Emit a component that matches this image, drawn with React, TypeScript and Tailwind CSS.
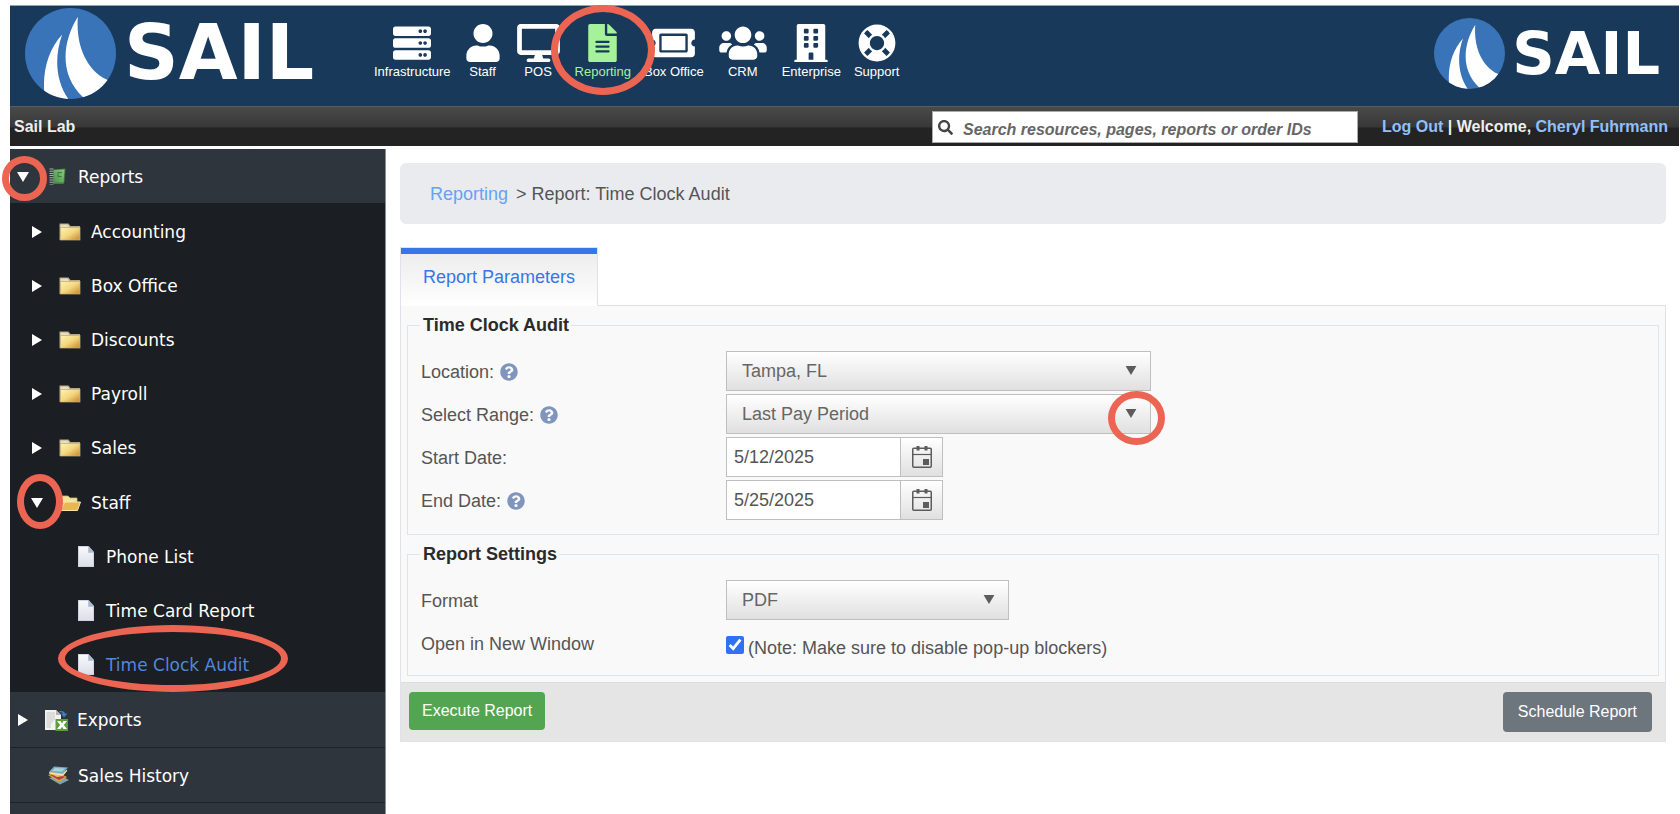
import { useState } from "react";
import type { ReactNode } from "react";
import type { IconType } from "react-icons";
import {
  FaBuilding,
  FaDesktop,
  FaFileAlt,
  FaLifeRing,
  FaQuestionCircle,
  FaSearch,
  FaServer,
  FaTicketAlt,
  FaUser,
  FaUsers,
} from "react-icons/fa";

function SailMark({ className }: { className: string }) {
  return (
    <svg viewBox="76 24 272 272" className={className} aria-hidden="true">
      <defs>
        <clipPath id="sail-disc">
          <circle cx="212" cy="160" r="136" />
        </clipPath>
      </defs>
      <circle cx="212" cy="160" r="136" fill="#3a74b8" />
      <g clipPath="url(#sail-disc)" fill="#fff">
        <path d="M187 103 C150 145 130 200 133 268 L140 310 L212 310 L204 294 C168 240 163 170 187 103Z" />
        <path d="M234 50 C185 130 180 225 249 290 L290 300 L340 250 L320 238 C255 205 228 130 234 50Z" />
      </g>
    </svg>
  );
}

function Ring({ className }: { className: string }) {
  return (
    <span
      aria-hidden="true"
      className={`pointer-events-none absolute z-20 rounded-[50%] border-[7px] border-[#ec6552] ${className}`}
    />
  );
}

const navItems: { label: string; icon: IconType; size: string }[] = [
  { label: "Infrastructure", icon: FaServer, size: "w-[38px]" },
  { label: "Staff", icon: FaUser, size: "w-[34px]" },
  { label: "POS", icon: FaDesktop, size: "w-[43px]" },
  { label: "Reporting", icon: FaFileAlt, size: "w-[29px]" },
  { label: "Box Office", icon: FaTicketAlt, size: "w-[43px]" },
  { label: "CRM", icon: FaUsers, size: "w-12" },
  { label: "Enterprise", icon: FaBuilding, size: "w-[34px]" },
  { label: "Support", icon: FaLifeRing, size: "w-[38px]" },
];

function Header() {
  return (
    <header>
      <div className="flex items-start border-t border-[#8fa3b5] bg-[#19395b] pr-[19px] pl-[15px]">
        <a href="#home" aria-label="Sail home" className="flex h-[100px] w-[349px] items-center gap-2 pb-[6px]">
          <SailMark className="size-[91px] shrink-0" />
          <span className="font-['DejaVu_Sans',sans-serif] text-[76px] leading-none font-bold text-white">SAIL</span>
        </a>
        <nav className="flex flex-1 gap-[13px] pt-[18px]">
          {navItems.map(({ label, icon: Icon, size }) => (
            <a
              key={label}
              href={`#${label}`}
              className={`relative flex flex-col items-center ${label === "Reporting" ? "text-[#a6f29a]" : "text-white"}`}
            >
              <Icon className={`mx-0.5 h-[38px] ${size}`} />
              <span className="mt-0.5 text-[13px] leading-4 whitespace-nowrap">{label}</span>
              {label === "Reporting" && <Ring className="top-[-19px] left-[-24px] h-[90px] w-[104px]" />}
            </a>
          ))}
        </nav>
        <a href="#sail" aria-label="Sail" className="flex h-[94px] items-center gap-[7px]">
          <SailMark className="size-[71px] shrink-0" />
          <span className="font-['DejaVu_Sans',sans-serif] text-[59px] leading-none font-bold text-white">SAIL</span>
        </a>
      </div>
      <div className="flex h-10 items-center border-t border-[#5b5b5b] bg-linear-to-b from-[#4a4a4a] from-0% via-[#383838] via-50% to-[#232323] to-55% pr-[11px] pl-1 text-base font-bold text-[#eeeeee]">
        <span className="flex-1">Sail Lab</span>
        <label className="mt-px mr-6 flex h-8 w-[426px] items-center gap-[10px] border border-[#aaaaaa] bg-white pl-[5px]">
          <FaSearch className="size-[15px] shrink-0 text-[#444444]" />
          <input
            aria-label="Search"
            placeholder="Search resources, pages, reports or order IDs"
            className="w-full bg-transparent pt-[6px] text-base font-bold italic outline-none placeholder:text-[#666666]"
          />
        </label>
        <span>
          <a href="#logout" className="text-[#8fc0fb]">Log Out</a> | Welcome,{" "}
          <a href="#profile" className="text-[#8fc0fb]">Cheryl Fuhrmann</a>
        </span>
      </div>
    </header>
  );
}

function DownArrow({ className }: { className: string }) {
  return (
    <svg viewBox="0 0 12 10" className={className} aria-hidden="true">
      <path d="M0 0H12L6 10Z" fill="currentColor" />
    </svg>
  );
}

function RightArrow() {
  return (
    <svg viewBox="0 0 10 12" className="h-3 w-[10px]" aria-hidden="true">
      <path d="M0 0L10 6L0 12Z" fill="currentColor" />
    </svg>
  );
}

function FolderIcon() {
  return (
    <svg viewBox="0 0 22 20" className="h-5 w-[22px]" aria-hidden="true">
      <defs>
        <linearGradient id="folder" x1="0" y1="0" x2="1" y2="1">
          <stop offset="0" stopColor="#fdf3b4" />
          <stop offset=".5" stopColor="#f3d77f" />
          <stop offset="1" stopColor="#c8862a" />
        </linearGradient>
      </defs>
      <path d="M.5 2.5V1.5H9.500L11.500 4H21V18H.5Z" fill="#b5a887" />
      <path d="M1.500 2.500H8.500L10.500 5H1.500Z" fill="#e9dfc0" />
      <rect x="1.500" y="5.500" width="19.500" height="12.500" fill="url(#folder)" stroke="#c9b47a" strokeWidth=".7" />
    </svg>
  );
}

function OpenFolderIcon() {
  return (
    <svg viewBox="0 0 22 20" className="h-5 w-[22px]" aria-hidden="true">
      <path d="M1 17V3H9L11 5H18V9L5 10L2 18Z" fill="#f6e39b" stroke="#c9b47a" strokeWidth=".8" />
      <path d="M6 9H21.500L18.500 17.500H1.500Z" fill="#e9b752" stroke="#f8e7ac" strokeWidth="1" />
    </svg>
  );
}

function PageIcon() {
  return (
    <svg viewBox="0 0 16 21" className="h-[21px] w-4" aria-hidden="true">
      <defs>
        <linearGradient id="page" x1="0" y1="0" x2="0" y2="1">
          <stop offset="0" stopColor="#f8f9fc" />
          <stop offset="1" stopColor="#dcdfe9" />
        </linearGradient>
      </defs>
      <path d="M0 0H10.500L16 6V21H0Z" fill="#cdd3df" />
      <path d="M1 1H10V7H15V20H1Z" fill="url(#page)" />
      <path d="M10.500 0L16 6.500H10.500Z" fill="#a9bad0" />
    </svg>
  );
}

function NotebookIcon() {
  return (
    <svg viewBox="0 0 17 17" className="size-[17px]" aria-hidden="true">
      <defs>
        <linearGradient id="notebook" x1="1" y1="0" x2="0" y2="1">
          <stop offset="0" stopColor="#8cc983" />
          <stop offset="1" stopColor="#4c9349" />
        </linearGradient>
      </defs>
      <path d="M4 1.500L16.500 .5L15.500 14L14.500 16H4Z" fill="#3f7f3e" />
      <path d="M5 2L15.500 1.500L14.500 14.500H5Z" fill="url(#notebook)" />
      <path d="M13 4.500H9V8.500H12.500" fill="none" stroke="#397a38" strokeWidth="1" />
      <path d="M2.500 .5V16.500" stroke="#aab0aa" strokeWidth="4" strokeDasharray="1 1.200" />
    </svg>
  );
}

function ExportIcon() {
  return (
    <svg viewBox="0 0 23 21" className="h-[21px] w-[23px]" aria-hidden="true">
      <path d="M0 0H11L16 5V20H0Z" fill="#f3f3f1" />
      <path d="M1.500 2H10V9L6 14V18H1.500Z" fill="#dcdcdc" />
      <path d="M11 0L16 5H11Z" fill="#b4b4b4" />
      <path d="M14 1.500C17 .5 19 1 20 3.500H22.500L19 7.500L16 3.500H18C17 2.500 16 2 14 2.500Z" fill="#3b7fc4" />
      <rect x="10.500" y="9" width="12.500" height="12" fill="#5c9f3c" />
      <path d="M12 11H15.500L17 13.500L18.500 11H22L18.800 15L22 19H18.500L17 16.800L15.500 19H12L15.200 15Z" fill="#fff" />
    </svg>
  );
}

function HistoryIcon() {
  return (
    <svg viewBox="0 0 21 19" className="h-[19px] w-[21px]" aria-hidden="true">
      <path d="M1 12L12 9L21 14L12 18.500Z" fill="#7fa3ad" />
      <path d="M0 9L9 6L19 11L11 16Z" fill="#d9a441" />
      <path d="M2 9L10 8L17 11L11 14Z" fill="#b73b4c" />
      <path d="M1 7L4 3L19 5L15 10L9 11Z" fill="#e8c35b" />
      <path d="M6 .5L20 1.500L15 7.500L1 6Z" fill="#74afc4" />
      <path d="M7 2L17 2.500L14 5.500L4 5Z" fill="#a9d2dc" />
      <path d="M1 7L15 9L19 4" fill="none" stroke="#f2ead2" strokeWidth="1" />
    </svg>
  );
}

function SideRow({ children, className }: { children: ReactNode; className: string }) {
  return (
    <a href="#item" className={`relative flex items-center pt-px ${className}`}>
      {children}
    </a>
  );
}

const folders = ["Accounting", "Box Office", "Discounts", "Payroll", "Sales"];
const staffReports = ["Phone List", "Time Card Report", "Time Clock Audit"];

function Sidebar() {
  return (
    <aside className="w-[376px] shrink-0 border-r border-[#8b8f94] bg-[#2f353d] font-['DejaVu_Sans',sans-serif] text-[17px] text-white">
      <SideRow className="h-[54px] pl-[7px]">
        <DownArrow className="mr-5 h-[10px] w-3" />
        <NotebookIcon />
        <span className="ml-3 pt-0.5">Reports</span>
        <Ring className="top-[7px] left-[-8px] size-[45px]" />
      </SideRow>
      <ul className="bg-[#1b1e22] py-px">
        {folders.map((name) => (
          <li key={name}>
            <SideRow className="h-[54px] pl-[22px]">
              <span className="mr-[17px]"><RightArrow /></span>
              <FolderIcon />
              <span className="ml-[10px] pt-0.5">{name}</span>
            </SideRow>
          </li>
        ))}
        <li>
          <SideRow className="mt-px h-[54px] pl-[21px]">
            <DownArrow className="mr-4 h-[10px] w-3" />
            <OpenFolderIcon />
            <span className="ml-[10px] pt-0.5">Staff</span>
            <Ring className="-top-px left-[7px] h-[55px] w-[46px]" />
          </SideRow>
          <ul>
            {staffReports.map((name) => (
              <li key={name}>
                <SideRow className={`h-[54px] pl-[68px] ${name === "Time Clock Audit" ? "text-[#5088da]" : ""}`}>
                  <PageIcon />
                  <span className="ml-3 pt-0.5">{name}</span>
                  {name === "Time Clock Audit" && <Ring className="top-[-12px] left-12 h-[67px] w-[230px]" />}
                </SideRow>
              </li>
            ))}
          </ul>
        </li>
      </ul>
      <SideRow className="h-14 border-b border-[#1f2328] pl-2">
        <span className="mr-[17px]"><RightArrow /></span>
        <ExportIcon />
        <span className="ml-[9px] pt-0.5">Exports</span>
      </SideRow>
      <SideRow className="h-[55px] border-b border-[#1f2328] pl-[38px]">
        <HistoryIcon />
        <span className="ml-[9px] pt-0.5">Sales History</span>
      </SideRow>
    </aside>
  );
}

function Help() {
  return (
    <button type="button" aria-label="Help" className="ml-[6px] text-[#7f95bd]">
      <FaQuestionCircle className="size-[18px]" />
    </button>
  );
}

function FieldLabel({ htmlFor, text, help }: { htmlFor: string; text: string; help?: boolean }) {
  return (
    <div className="flex h-10 items-center pt-0.5">
      <label htmlFor={htmlFor}>{text}</label>
      {help && <Help />}
    </div>
  );
}

function SelectBox({ id, options, width, ring }: { id: string; options: string[]; width: string; ring?: boolean }) {
  return (
    <div className={`relative ${width}`}>
      <select
        id={id}
        className="h-10 w-full appearance-none border border-[#bfbfbf] bg-linear-to-b from-white to-[#e0e0e0] pl-[15px] text-[#666666]"
      >
        {options.map((option) => (
          <option key={option}>{option}</option>
        ))}
      </select>
      <DownArrow className="pointer-events-none absolute top-[15px] right-[14px] h-[9px] w-3 text-[#5c5c5c]" />
      {ring && <Ring className="top-[-3px] right-[-14px] h-[54px] w-[57px]" />}
    </div>
  );
}

function DateBox({ id, initial }: { id: string; initial: string }) {
  const [value, setValue] = useState(initial);
  return (
    <div className="flex h-10 w-[217px] border border-[#bfbfbf] bg-white">
      <input
        id={id}
        value={value}
        onChange={(event) => setValue(event.target.value)}
        className="min-w-0 flex-1 pl-[7px] text-[#555555] outline-none"
      />
      <button
        type="button"
        aria-label="Open calendar"
        className="flex w-[42px] items-center justify-center border-l border-[#bfbfbf] bg-linear-to-b from-white to-[#e0e0e0]"
      >
        <svg viewBox="0 0 20 22" className="h-[22px] w-5" fill="none" stroke="#5c5c5c" aria-hidden="true">
          <rect x=".75" y="2.250" width="18.500" height="19" rx="1" strokeWidth="1.500" />
          <path d="M1 8.500H19" strokeWidth="1.200" />
          <path d="M6 0V4.500M14 0V4.500" strokeWidth="3" />
          <rect x="11" y="13" width="6" height="6" fill="#5c5c5c" stroke="none" />
        </svg>
      </button>
    </div>
  );
}

function Group({ title, className, children }: { title: string; className: string; children: ReactNode }) {
  return (
    <fieldset className={`border border-[#dfe4e9] px-[13px] pt-4 ${className}`}>
      <legend className="-ml-px pr-0.5 pl-[3px] leading-5 font-bold text-[#2b2b2b]">{title}</legend>
      <div className="grid grid-cols-[305px_1fr] gap-y-[3px]">{children}</div>
    </fieldset>
  );
}

function ReportPage() {
  return (
    <main className="min-w-0 flex-1 pt-[14px] pr-[13px] pl-[14px] text-lg leading-6 text-[#555555]">
      <div className="flex h-[61px] items-center gap-2 rounded-md bg-[#eaebef] px-[30px]">
        <a href="#reporting" className="text-[#66a1f5]">Reporting</a>
        <span>&gt; Report: Time Clock Audit</span>
      </div>
      <div className="mt-[23px] flex">
        <button
          type="button"
          className="z-10 -mb-px h-[59px] border border-b-0 border-[#dfe2e8] bg-linear-to-b from-[#ebebeb] to-white text-[#3577e8]"
        >
          <span className="flex h-full items-center border-t-[6px] border-[#3577e8] px-[22px] pb-[6px]">Report Parameters</span>
        </button>
      </div>
      <form
        className="border border-[#dfe2e8] bg-[#f9f9f9]"
        onSubmit={(event) => event.preventDefault()}
      >
        <div className="px-[6px] pt-[9px] pb-[6px]">
          <Group title="Time Clock Audit" className="pb-[14px]">
            <FieldLabel htmlFor="location" text="Location:" help />
            <SelectBox id="location" options={["Tampa, FL"]} width="w-[425px]" />
            <FieldLabel htmlFor="range" text="Select Range:" help />
            <SelectBox id="range" options={["Last Pay Period"]} width="w-[425px]" ring />
            <FieldLabel htmlFor="start" text="Start Date:" />
            <DateBox id="start" initial="5/12/2025" />
            <FieldLabel htmlFor="end" text="End Date:" help />
            <DateBox id="end" initial="5/25/2025" />
          </Group>
          <Group title="Report Settings" className="mt-[9px] pb-3">
            <FieldLabel htmlFor="format" text="Format" />
            <SelectBox id="format" options={["PDF"]} width="w-[283px]" />
            <FieldLabel htmlFor="new-window" text="Open in New Window" />
            <div className="flex items-end gap-1 pb-[3px]">
              <input id="new-window" type="checkbox" defaultChecked className="mb-[6px] size-[18px] accent-[#2f72f5]" />
              <span>(Note: Make sure to disable pop-up blockers)</span>
            </div>
          </Group>
        </div>
        <div className="flex items-start justify-between border-t border-[#dcdcdc] bg-[#e5e5e5] py-[9px] pr-[13px] pl-2 text-base text-white">
          <button type="submit" className="h-[38px] rounded bg-[#54a552] px-[13px]">Execute Report</button>
          <button type="button" className="h-10 rounded bg-[#6d757d] px-[15px]">Schedule Report</button>
        </div>
      </form>
    </main>
  );
}

export default function App() {
  return (
    <div className="flex h-screen flex-col overflow-hidden bg-white pt-[5px] pr-px pl-[10px] font-['Liberation_Sans',Arial,sans-serif]">
      <Header />
      <div className="flex min-h-0 flex-1 pt-[3px]">
        <Sidebar />
        <ReportPage />
      </div>
    </div>
  );
}
